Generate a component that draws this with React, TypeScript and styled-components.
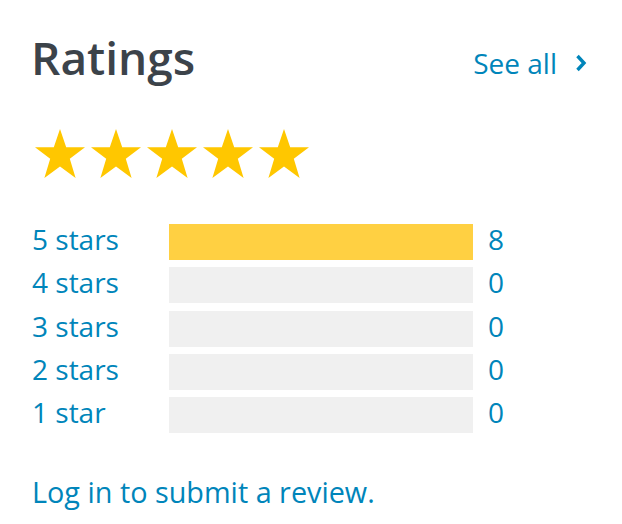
import React from "react";
import styled, { createGlobalStyle } from "styled-components";

const Global = createGlobalStyle`
  html, body { margin: 0; padding: 0; background: #fff; }
  body { font-family: "Open Sans", "Noto Sans", sans-serif; }
`;

const Card = styled.section`
  width: 622px;
  height: 524px;
  box-sizing: border-box;
  padding: 24.5px 35px 0 31px;
  display: flex;
  flex-direction: column;
`;

const Header = styled.header`
  display: flex;
  align-items: flex-start;
  justify-content: space-between;
`;

const Title = styled.h2`
  margin: 0;
  font-size: 46px;
  line-height: 64px;
  font-weight: 600;
  color: #3c434a;
`;

const SeeAll = styled.a`
  display: flex;
  align-items: center;
  gap: 18px;
  margin-top: 19px;
  font-size: 28px;
  color: #0085ba;
  text-decoration: none;
  svg { display: block; }
`;

const Stars = styled.div`
  display: flex;
  gap: 6px;
  margin-top: 40.5px;
  padding-left: 4px;
`;

const Rows = styled.div`
  display: flex;
  flex-direction: column;
  gap: 7.3px;
  margin-top: 46px;
`;

const Row = styled.div`
  display: grid;
  grid-template-columns: 138px 304px auto;
  align-items: start;
  height: 36px;
`;

const Label = styled.a`
  font-size: 28px;
  line-height: 30px;
  color: #0085ba;
  text-decoration: none;
  padding-left: 1px;
  white-space: nowrap;
`;

const Track = styled.div`
  height: 36px;
  background: #f0f0f0;
`;

const Fill = styled.div`
  height: 100%;
  background: #ffd042;
`;

const Count = styled.span`
  font-size: 28px;
  line-height: 30px;
  color: #0085ba;
  padding-left: 15px;
`;

const Footer = styled.a`
  margin-top: 39px;
  font-size: 28.8px;
  color: #0085ba;
  text-decoration: none;
  padding-left: 1px;
`;

const Star = () => (
  <svg width="50" height="49" viewBox="0 0 50 49">
    <polygon
      fill="#ffc700"
      points="25,0 31.2,18.3 50,18.3 34.8,29.8 40.6,49 25,37.6 9.4,49 15.2,29.8 0,18.3 18.8,18.3"
    />
  </svg>
);

const data = [
  { label: "5 stars", count: 8 },
  { label: "4 stars", count: 0 },
  { label: "3 stars", count: 0 },
  { label: "2 stars", count: 0 },
  { label: "1 star", count: 0 },
];

export default function App() {
  const max = Math.max(...data.map((d) => d.count));
  return (
    <Card>
      <Global />
      <Header>
        <Title>Ratings</Title>
        <SeeAll href="#">
          See all
          <svg width="12" height="18" viewBox="0 0 12 18">
            <path d="M2.5 2 L9 9 L2.5 16" fill="none" stroke="#0085ba" strokeWidth="3.4" />
          </svg>
        </SeeAll>
      </Header>
      <Stars>
        {[0, 1, 2, 3, 4].map((i) => (
          <Star key={i} />
        ))}
      </Stars>
      <Rows>
        {data.map((d) => (
          <Row key={d.label}>
            <Label href="#">{d.label}</Label>
            <Track>
              <Fill style={{ width: `${max ? (d.count / max) * 100 : 0}%` }} />
            </Track>
            <Count>{d.count}</Count>
          </Row>
        ))}
      </Rows>
      <Footer href="#">Log in to submit a review.</Footer>
    </Card>
  );
}
